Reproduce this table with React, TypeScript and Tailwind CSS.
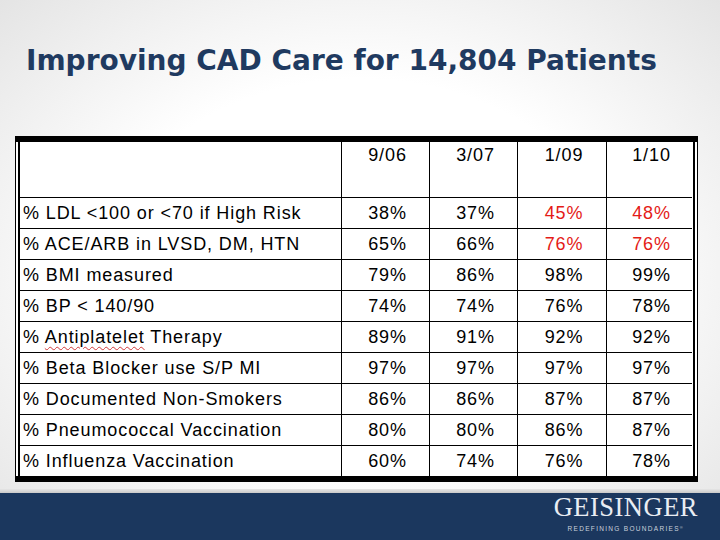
import React from 'react';

const rows: { label: React.ReactNode; values: string[]; red?: boolean }[] = [
  { label: '% LDL <100 or <70 if High Risk', values: ['38%', '37%', '45%', '48%'], red: true },
  { label: '% ACE/ARB in LVSD, DM, HTN', values: ['65%', '66%', '76%', '76%'], red: true },
  { label: '% BMI measured', values: ['79%', '86%', '98%', '99%'] },
  { label: '% BP < 140/90', values: ['74%', '74%', '76%', '78%'] },
  {
    label: (
      <>
        %{' '}
        <span className="underline decoration-wavy decoration-[#d23a3a] decoration-1 underline-offset-[3px]">
          Antiplatelet
        </span>{' '}
        Therapy
      </>
    ),
    values: ['89%', '91%', '92%', '92%'],
  },
  { label: '% Beta Blocker use S/P MI', values: ['97%', '97%', '97%', '97%'] },
  { label: '% Documented Non-Smokers', values: ['86%', '86%', '87%', '87%'] },
  { label: '% Pneumococcal Vaccination', values: ['80%', '80%', '86%', '87%'] },
  { label: '% Influenza Vaccination', values: ['60%', '74%', '76%', '78%'] },
];

const dates = ['9/06', '3/07', '1/09', '1/10'];

const App: React.FC = () => {
  return (
    <div className="w-[720px] h-[540px] flex flex-col overflow-hidden bg-[radial-gradient(ellipse_at_center,#ffffff_50%,#e4e4e4_100%)]">
      {/* Slide title */}
      <h1 className="pl-[26px] pt-[45px] h-[77px] text-[28px] leading-[32px] font-bold text-[#1f3a60] font-['DejaVu_Sans',sans-serif] whitespace-nowrap">
        Improving CAD Care for 14,804 Patients
      </h1>

      {/* Table with thick-thin frame */}
      <div className="mt-[59px] ml-[15px] w-[683px] bg-white border-x border-y-[6px] border-black px-[2px]">
        <div className="border-x-2 border-black grid grid-cols-[321px_88px_88px_89px_86px] font-['Liberation_Sans',Arial,sans-serif] text-[18px] tracking-[0.9px] text-black">
          <div className="h-[55px]" />
          {dates.map((d) => (
            <div key={d} className="h-[55px] border-l border-black text-center pl-[4px]">
              {d}
            </div>
          ))}

          {rows.map((r, i) => (
            <React.Fragment key={i}>
              <div className="h-[31px] border-t border-black pl-[3px] flex items-center whitespace-nowrap">
                <span>{r.label}</span>
              </div>
              {r.values.map((v, j) => (
                <div
                  key={j}
                  className={`h-[31px] border-t border-l border-black flex items-center justify-center pl-[4px] ${
                    r.red && j >= 2 ? 'text-[#e41b17]' : ''
                  }`}
                >
                  {v}
                </div>
              ))}
            </React.Fragment>
          ))}
        </div>
      </div>

      {/* Footer */}
      <div className="mt-auto">
        <div className="h-[4px] bg-gradient-to-b from-[#e6e6e6] to-[#c9c9c9]" />
        <div className="h-[47px] bg-[#1b375e] flex justify-end pr-[22px]">
          <div className="flex flex-col items-center pt-[1px]">
            <span className="font-['Liberation_Serif',serif] text-[26.5px] leading-[26px] text-[#e9edf3] tracking-[0.5px]">
              GEISINGER
            </span>
            <span className="mt-[5px] font-['Liberation_Sans',sans-serif] text-[6.5px] leading-[7px] tracking-[1.3px] text-[#c9d1dc]">
              REDEFINING BOUNDARIES<sup className="text-[4px]">®</sup>
            </span>
          </div>
        </div>
      </div>
    </div>
  );
};

export default App;
